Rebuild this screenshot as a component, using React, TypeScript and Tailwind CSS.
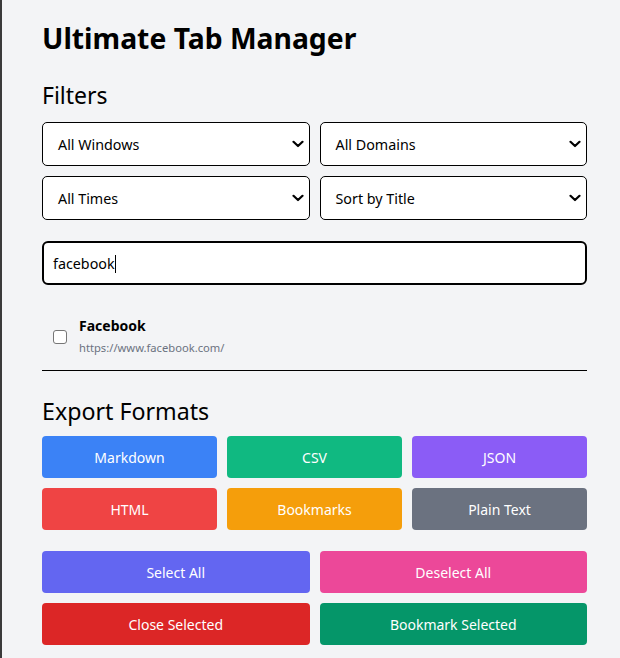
import React from "react";

const font = { fontFamily: '"Noto Sans", "Open Sans", Arial, sans-serif' };

function Chevron() {
  return (
    <svg width="12" height="8" viewBox="0 0 12 8" className="pointer-events-none absolute right-[5px] top-1/2 -translate-y-1/2">
      <path d="M1.5 1.8 L6 6 L10.5 1.8" fill="none" stroke="#000" strokeWidth="2.2" strokeLinecap="round" strokeLinejoin="round" />
    </svg>
  );
}

function FakeSelect({ label }: { label: string }) {
  return (
    <div className="relative h-[44px] rounded-[5px] border border-black bg-white flex items-center pl-[15px] pt-[2px] text-[14.3px] text-black">
      <span>{label}</span>
      <Chevron />
    </div>
  );
}

function Btn({ label, cls }: { label: string; cls: string }) {
  return (
    <button className={`h-[42px] rounded-[4px] text-white text-[14px] flex items-center justify-center ${cls}`}>
      {label}
    </button>
  );
}

export default function App() {
  return (
    <div className="min-h-[658px] bg-[#f3f4f6] flex" style={font}>
      <div className="w-[2px] bg-[#3a3a3a] shrink-0" />
      <div className="w-[545px] ml-[40px] pt-[20px]">
        <h1 className="text-[28.3px] leading-[36px] font-bold text-black">Ultimate Tab Manager</h1>
        <h2 className="mt-[23px] text-[23px] leading-[32px] text-black">Filters</h2>
        <div className="mt-[11px] grid grid-cols-2 gap-[10px]">
          <FakeSelect label="All Windows" />
          <FakeSelect label="All Domains" />
          <FakeSelect label="All Times" />
          <FakeSelect label="Sort by Title" />
        </div>
        <div className="mt-[21px] h-[44px] rounded-[6px] border-2 border-black bg-white flex items-center pl-[9px] pt-[1px] text-[14.3px] text-black">
          <span>facebook</span>
          <span className="inline-block w-[1px] h-[18px] bg-black" />
        </div>
        <div className="mt-[18px] py-[14px] border-b border-black flex items-center pl-[11px] gap-[12px]">
          <span className="w-[14px] h-[14px] rounded-[3px] border border-[#767676] bg-white shrink-0" />
          <div className="flex flex-col gap-[5px]">
            <div className="text-[14px] leading-[18px] font-bold text-black">Facebook</div>
            <div className="text-[11.2px] leading-[16px] text-[#6b7280]">https://www.facebook.com/</div>
          </div>
        </div>
        <h2 className="mt-[24px] text-[23.2px] leading-[32px] text-black">Export Formats</h2>
        <div className="mt-[9px] grid grid-cols-3 gap-[10px]">
          <Btn label="Markdown" cls="bg-[#3b82f6]" />
          <Btn label="CSV" cls="bg-[#10b981]" />
          <Btn label="JSON" cls="bg-[#8b5cf6]" />
          <Btn label="HTML" cls="bg-[#ef4444]" />
          <Btn label="Bookmarks" cls="bg-[#f59e0b]" />
          <Btn label="Plain Text" cls="bg-[#6b7280]" />
        </div>
        <div className="mt-[21px] grid grid-cols-2 gap-[10px]">
          <Btn label="Select All" cls="bg-[#6366f1]" />
          <Btn label="Deselect All" cls="bg-[#ec4899]" />
          <Btn label="Close Selected" cls="bg-[#dc2626]" />
          <Btn label="Bookmark Selected" cls="bg-[#059669]" />
        </div>
      </div>
    </div>
  );
}
